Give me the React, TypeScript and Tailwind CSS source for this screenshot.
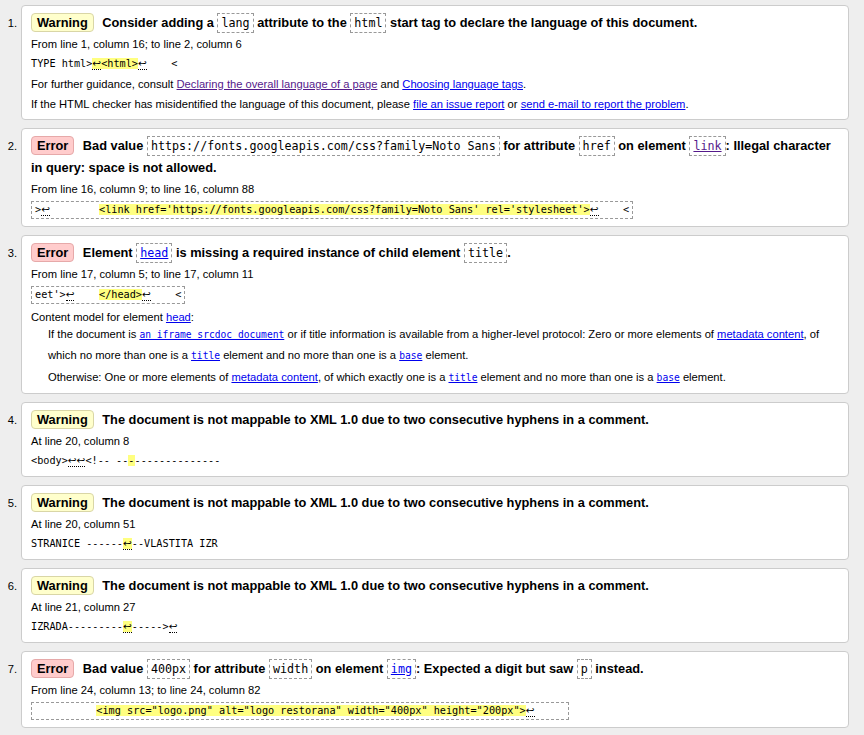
import React from "react";

const mono = "font-['DejaVu_Sans_Mono',monospace]";

function Badge({ kind }: { kind: "warning" | "error" }) {
  const cls =
    kind === "warning"
      ? "border-[#d9d6a6] bg-[#ffffcc]"
      : "border-[#e6a9a9] bg-[#ffcccc]";
  return (
    <span
      className={`mr-[5px] inline-block rounded-[4px] border px-[5px] leading-[17px] font-bold ${cls}`}
    >
      {kind === "warning" ? "Warning" : "Error"}
    </span>
  );
}

// code box inside a message title
function Box({ children }: { children: React.ReactNode }) {
  return (
    <code
      className={`border border-dashed border-[#999999] px-[3px] py-[2px] text-[11.7px] font-normal ${mono}`}
    >
      {children}
    </code>
  );
}

// line feed marker
function Lf({ n = 1 }: { n?: number }) {
  return (
    <span className="border-b border-dotted border-black font-['DejaVu_Sans',sans-serif] text-[10.5px] leading-none">
      {"↩".repeat(n)}
    </span>
  );
}

function Hl({ children }: { children: React.ReactNode }) {
  return <span className="bg-[#ffff80]">{children}</span>;
}

function Extract({
  boxed,
  children,
}: {
  boxed?: boolean;
  children: React.ReactNode;
}) {
  if (boxed) {
    return (
      <div className="py-[2px]">
        <code
          className={`block h-[18px] w-fit overflow-hidden whitespace-pre border border-dashed border-[#999999] px-[3px] text-[10.2px] leading-[16px] ${mono}`}
        >
          {children}
        </code>
      </div>
    );
  }
  return (
    <code
      className={`block h-[20px] whitespace-pre text-[10.2px] leading-[20px] ${mono}`}
    >
      {children}
    </code>
  );
}

function A({
  children,
  visited,
  code,
}: {
  children: React.ReactNode;
  visited?: boolean;
  code?: boolean;
}) {
  return (
    <a
      href="#"
      className={`underline ${visited ? "text-[#551a8b]" : "text-[#0000ee]"} ${
        code ? `${mono} text-[9.65px]` : ""
      }`}
    >
      {children}
    </a>
  );
}

function Item({ n, children }: { n: number; children: React.ReactNode }) {
  return (
    <li className="mb-[8px] flex">
      <div className="w-[21px] shrink-0 pr-[4px] pt-[7px] text-right text-[11.2px] leading-[22px]">
        {n}.
      </div>
      <div className="flex-1 rounded-[4px] border border-[#cccccc] bg-white pb-[5px] pl-[9px] pr-[9px] pt-[6px]">
        {children}
      </div>
    </li>
  );
}

function Title({ children }: { children: React.ReactNode }) {
  return <p className="text-[12.8px] font-bold leading-[22px]">{children}</p>;
}

function Loc({ children }: { children: React.ReactNode }) {
  return <p className="text-[11.2px] leading-[20px]">{children}</p>;
}

export default function App() {
  return (
    <div className="min-h-screen bg-[#eeeeee] pr-[15px] pt-[5px] font-['Liberation_Sans',Arial,sans-serif] text-black">
      <ol>
        <Item n={1}>
          <Title>
            <Badge kind="warning" /> Consider adding a <Box>lang</Box> attribute
            to the <Box>html</Box> start tag to declare the language of this
            document.
          </Title>
          <Loc>From line 1, column 16; to line 2, column 6</Loc>
          <Extract>
            TYPE html&gt;
            <Hl>
              <Lf />
              &lt;html&gt;
            </Hl>
            <Lf />
            {"    <"}
          </Extract>
          <p className="text-[11.2px] leading-[20px]">
            For further guidance, consult{" "}
            <A visited>Declaring the overall language of a page</A> and{" "}
            <A>Choosing language tags</A>.
          </p>
          <p className="text-[11.2px] leading-[20px]">
            If the HTML checker has misidentified the language of this document,
            please <A>file an issue report</A> or{" "}
            <A>send e-mail to report the problem</A>.
          </p>
        </Item>

        <Item n={2}>
          <Title>
            <Badge kind="error" /> Bad value{" "}
            <Box>https://fonts.googleapis.com/css?family=Noto Sans</Box> for
            attribute <Box>href</Box> on element{" "}
            <Box>
              <a href="#" className="text-[#551a8b] underline">
                link
              </a>
            </Box>
            : Illegal character in query: space is not allowed.
          </Title>
          <Loc>From line 16, column 9; to line 16, column 88</Loc>
          <Extract boxed>
            &gt;
            <Lf />
            {"        "}
            <Hl>
              &lt;link href='https://fonts.googleapis.com/css?family=Noto Sans'
              rel='stylesheet'&gt;
            </Hl>
            <Lf />
            {"    <"}
          </Extract>
        </Item>

        <Item n={3}>
          <Title>
            <Badge kind="error" /> Element{" "}
            <Box>
              <a href="#" className="text-[#0000ee] underline">
                head
              </a>
            </Box>{" "}
            is missing a required instance of child element <Box>title</Box>.
          </Title>
          <Loc>From line 17, column 5; to line 17, column 11</Loc>
          <Extract boxed>
            eet'&gt;
            <Lf />
            {"    "}
            <Hl>&lt;/head&gt;</Hl>
            <Lf />
            {"    <"}
          </Extract>
          <p className="mt-[4px] text-[11.2px] leading-[14px]">
            Content model for element <A>head</A>:
          </p>
          <div className="pl-[17px] text-[11.2px] leading-[21px]">
            <p>
              If the document is <A code>an iframe srcdoc document</A> or if
              title information is available from a higher-level protocol: Zero
              or more elements of <A>metadata content</A>, of which no more than
              one is a <A code>title</A> element and no more than one is a{" "}
              <A code>base</A> element.
            </p>
            <p className="mt-[1px]">
              Otherwise: One or more elements of <A>metadata content</A>, of
              which exactly one is a <A code>title</A> element and no more than
              one is a <A code>base</A> element.
            </p>
          </div>
        </Item>

        <Item n={4}>
          <Title>
            <Badge kind="warning" /> The document is not mappable to XML 1.0 due
            to two consecutive hyphens in a comment.
          </Title>
          <Loc>At line 20, column 8</Loc>
          <Extract>
            &lt;body&gt;
            <Lf n={2} />
            {"<!-- --"}
            <Hl>-</Hl>
            {"--------------"}
          </Extract>
        </Item>

        <Item n={5}>
          <Title>
            <Badge kind="warning" /> The document is not mappable to XML 1.0 due
            to two consecutive hyphens in a comment.
          </Title>
          <Loc>At line 20, column 51</Loc>
          <Extract>
            {"STRANICE ------"}
            <Hl>
              <Lf />
            </Hl>
            {"--VLASTITA IZR"}
          </Extract>
        </Item>

        <Item n={6}>
          <Title>
            <Badge kind="warning" /> The document is not mappable to XML 1.0 due
            to two consecutive hyphens in a comment.
          </Title>
          <Loc>At line 21, column 27</Loc>
          <Extract>
            {"IZRADA---------"}
            <Hl>
              <Lf />
            </Hl>
            {"----->"}
            <Lf />
          </Extract>
        </Item>

        <Item n={7}>
          <Title>
            <Badge kind="error" /> Bad value <Box>400px</Box> for attribute{" "}
            <Box>width</Box> on element{" "}
            <Box>
              <a href="#" className="text-[#0000ee] underline">
                img
              </a>
            </Box>
            : Expected a digit but saw <Box>p</Box> instead.
          </Title>
          <Loc>From line 24, column 13; to line 24, column 82</Loc>
          <Extract boxed>
            {"          "}
            <Hl>
              &lt;img src="logo.png" alt="logo restorana" width="400px"
              height="200px"&gt;
            </Hl>
            <Lf />
            {"     "}
          </Extract>
        </Item>
      </ol>
    </div>
  );
}
